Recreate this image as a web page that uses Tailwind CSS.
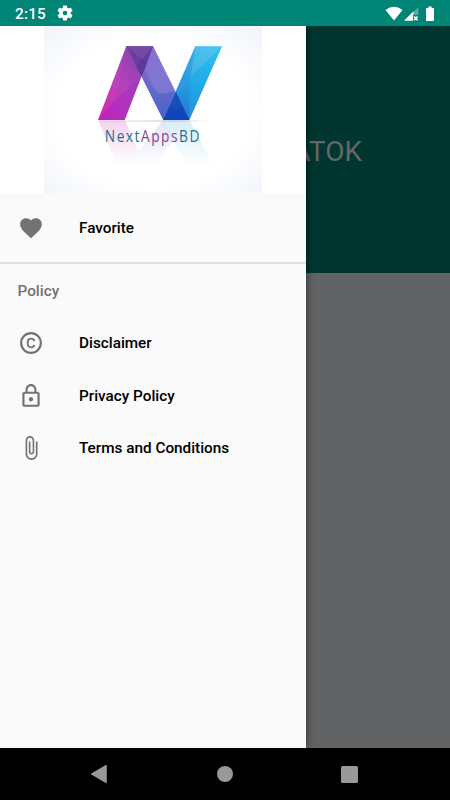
<!DOCTYPE html>
<html lang="en">
<head>
<meta charset="utf-8">
<title>NextAppsBD</title>
<script src="https://cdn.jsdelivr.net/npm/@tailwindcss/browser@4"></script>
</head>
<body class="bg-black">
<div class="w-[450px] h-[800px] overflow-hidden flex flex-col font-['Roboto',sans-serif]">
  <header class="h-[26px] shrink-0 bg-[#008577] flex items-center justify-between pl-[15px] pr-4 text-white">
    <div class="flex items-center gap-[11px]">
      <span class="text-[15.3px] leading-[26px] font-medium tracking-[0.2px] pt-[2px]">2:15</span>
      <svg class="w-4 h-4" viewBox="1.5 1.5 21 21" fill="#fff"><path d="M19.43 12.98c.04-.32.07-.64.07-.98s-.03-.66-.07-.98l2.11-1.65c.19-.15.24-.42.12-.64l-2-3.46c-.12-.22-.39-.3-.61-.22l-2.49 1c-.52-.4-1.08-.73-1.69-.98l-.38-2.65C14.46 2.18 14.25 2 14 2h-4c-.25 0-.46.18-.49.42l-.38 2.65c-.61.25-1.17.59-1.69.98l-2.49-1c-.23-.09-.49 0-.61.22l-2 3.46c-.13.22-.07.49.12.64l2.11 1.65c-.04.32-.07.65-.07.98s.03.66.07.98l-2.11 1.65c-.19.15-.24.42-.12.64l2 3.46c.12.22.39.3.61.22l2.49-1c.52.4 1.08.73 1.69.98l.38 2.65c.03.24.24.42.49.42h4c.25 0 .46-.18.49-.42l.38-2.65c.61-.25 1.17-.59 1.69-.98l2.49 1c.23.09.49 0 .61-.22l2-3.46c.12-.22.07-.49-.12-.64l-2.11-1.65zM12 15a3 3 0 1 1 0-6 3 3 0 0 1 0 6z"/></svg>
    </div>
    <div class="flex items-center pt-[1px]">
      <svg class="w-[18px] h-4" viewBox="0 0 18 16"><path d="M9 14.6 .5 4Q9-2.4 17.5 4Z" fill="#fff"/></svg>
      <svg class="w-4 h-4 ml-[1px]" viewBox="0 0 16 16"><path d="M14.3 1.2V9H9V6.5Z" fill="#fff" fill-opacity=".35"/><path d="M0 14.8 9.5 5.3V14.8Z" fill="#fff"/><path d="M9 8.8h6v6.4H9z" fill="#008577"/><path d="m10 10.5 3.6 3.8m0-3.8L10 14.3" stroke="#fff" stroke-width="1.5"/></svg>
      <svg class="w-2 h-4 ml-[6px]" viewBox="0 0 8 16" fill="#fff"><path d="M2.4.5h3.2V2H7.3q.7 0 .7.7v11.6q0 .7-.7.7H.7q-.7 0-.7-.7V2.7Q0 2 .7 2h1.7z"/></svg>
    </div>
  </header>

  <main class="relative h-[722px] shrink-0 bg-[#616264]">
    <div class="h-[247px] bg-[#003530] flex items-center justify-end pr-[88px] pt-[5px]">
      <span class="text-[28px] leading-[32px] text-[#666]">ATOK</span>
    </div>

    <aside class="absolute inset-y-0 left-0 w-[306px] bg-[#fafafa] shadow-[1px_0_7px_rgba(0,0,0,0.45)] [clip-path:inset(0_-20px_0_0)] flex flex-col">
      <div class="h-[167px] shrink-0 bg-white flex justify-center">
        <svg class="w-[218px] h-[167px]" viewBox="44 26 218 167">
          <defs>
            <radialGradient id="bg" cx=".5" cy=".52" r=".74"><stop offset=".6" stop-color="#fff"/><stop offset=".8" stop-color="#f7f9fd"/><stop offset="1" stop-color="#f0f2f9"/></radialGradient>
            <linearGradient id="left" x1="98" y1="112" x2="145" y2="60" gradientUnits="userSpaceOnUse"><stop stop-color="#d321b4"/><stop offset=".5" stop-color="#b640bc"/><stop offset="1" stop-color="#8c42b2"/></linearGradient>
            <linearGradient id="mid" x1="135" y1="46" x2="178" y2="120" gradientUnits="userSpaceOnUse"><stop stop-color="#8957bd"/><stop offset=".5" stop-color="#716bca"/><stop offset="1" stop-color="#3f60cb"/></linearGradient>
            <linearGradient id="right" x1="216" y1="46" x2="175" y2="120" gradientUnits="userSpaceOnUse"><stop stop-color="#40c2f0"/><stop offset=".5" stop-color="#289fe2"/><stop offset="1" stop-color="#2373d2"/></linearGradient>
            <linearGradient id="fade" x1="0" y1="120" x2="0" y2="166" gradientUnits="userSpaceOnUse"><stop stop-color="#fff" stop-opacity=".26"/><stop offset="1" stop-color="#fff" stop-opacity="0"/></linearGradient>
            <mask id="m" maskUnits="userSpaceOnUse" x="44" y="120" width="218" height="60"><path d="M44 120.5h218v60H44z" fill="url(#fade)"/></mask>
            <radialGradient id="sh"><stop stop-color="#9298a5" stop-opacity=".3"/><stop offset="1" stop-color="#9298a5" stop-opacity="0"/></radialGradient>
          </defs>
          <path d="M44 26h218v167H44z" fill="url(#bg)"/>
          <ellipse cx="143" cy="121" rx="58" ry="1.5" fill="url(#sh)"/>
          <ellipse cx="176" cy="121" rx="36" ry="1.5" fill="url(#sh)"/>
          <g mask="url(#m)">
            <path d="M98 120h27l19 45h-27z" fill="#d74dbe"/>
            <path d="M163.3 120h26l-35 45h-27z" fill="#8c8dde"/>
            <path d="M163.3 120h26l24 45h-27z" fill="#64bdea"/>
          </g>
          <path d="M126.3 46.3H153L124.7 120H98Z" fill="url(#left)"/>
          <path d="M98 120 115 100 141.5 76.5 124.7 120Z" fill="#9a2cc4" fill-opacity=".4"/>
          <path d="M126.3 46.3 115 100 98 120Z" fill="#e05abb" fill-opacity=".13"/>
          <path d="M126.3 46.3H153L189.3 120H163.3Z" fill="url(#mid)"/>
          <path d="M153 46.3 176 92 157 94 145 70Z" fill="#8d84dd" fill-opacity=".5"/>
          <path d="M141.5 76.5 176 109 189.3 120H163.3Z" fill="#4f66cd" fill-opacity=".35"/>
          <path d="M195.3 46.3H222L189.3 120H163.3Z" fill="url(#right)"/>
          <path d="M195.3 46.3H222L190.3 77.5Z" fill="#64cbf2" fill-opacity=".35"/>
          <path d="M222 46.3 189.3 120 190.3 77.5Z" fill="#12bdf0" fill-opacity=".35"/>
          <path d="M195.3 46.3 176 92 163.3 120 190.3 77.5Z" fill="#3798e2" fill-opacity=".45"/>
          <path d="M126.3 46.3H153L141.5 76.5Z" fill="#7349a5"/>
          <path d="M126.3 46.3 147 63 141.5 76.5Z" fill="#5d3398" fill-opacity=".5"/>
          <path d="M153 46.3 136 67 141.5 76.5Z" fill="#512f98" fill-opacity=".5"/>
          <path d="M176 92 189.3 120H163.3Z" fill="#174fb9"/>
          <path d="M163.3 120 182 105.5 189.3 120Z" fill="#0e3eba" fill-opacity=".5"/>
          <path d="M189.3 120 170 105.5 163.3 120Z" fill="#0e3eba" fill-opacity=".5"/>
          <text transform="translate(104.8 142) scale(.88 1)" font-family="'Open Sans','Noto Sans',sans-serif" font-size="15.6" textLength="107.5" lengthAdjust="spacing" fill="#167394">Next<tspan fill="#8c3e94">Apps</tspan>BD</text>
        </svg>
      </div>

      <nav class="flex flex-col text-[15.3px] font-medium text-black">
        <a class="h-[69px] flex items-center pl-[17.5px] border-b-2 border-[#e0e0e0] box-content">
          <svg class="w-[26px] h-[26px] mr-[35.5px]" viewBox="0 0 24 24" fill="#737373"><path d="m12 21.35-1.45-1.32C5.4 15.36 2 12.28 2 8.5 2 5.42 4.42 3 7.5 3c1.74 0 3.41.81 4.5 2.09C13.09 3.81 14.76 3 16.5 3 19.58 3 22 5.42 22 8.5c0 3.78-3.4 6.86-8.55 11.54L12 21.35z"/></svg>
          <span class="pt-[1px]">Favorite</span>
        </a>
        <h2 class="h-[53px] pl-[17.5px] pt-[2px] flex items-center text-[#737373]">Policy</h2>
        <a class="h-[52.5px] flex items-center pl-[17.5px]">
          <svg class="w-[26px] h-[26px] mr-[35.5px]" viewBox="0 0 24 24" fill="none" stroke="#737373" stroke-width="2"><circle cx="12" cy="12" r="9.1"/><path d="M15 10.2Q14.7 8 12.1 8 9 8 9 11.2v1.6Q9 16 12.1 16q2.6 0 2.9-2.2" stroke-width="1.7"/></svg>
          <span>Disclaimer</span>
        </a>
        <a class="h-[52.5px] flex items-center pl-[17.5px]">
          <svg class="w-[26px] h-[26px] mr-[35.5px]" viewBox="0 0 24 24" fill="#737373"><path d="M12 17c1.1 0 2-.9 2-2s-.9-2-2-2-2 .9-2 2 .9 2 2 2zm6-9h-1V6c0-2.76-2.24-5-5-5S7 3.24 7 6v2H6c-1.1 0-2 .9-2 2v10c0 1.1.9 2 2 2h12c1.1 0 2-.9 2-2V10c0-1.1-.9-2-2-2zM8.9 6c0-1.71 1.39-3.1 3.1-3.1s3.1 1.39 3.1 3.1v2H8.9V6zM18 20H6V10h12v10z"/></svg>
          <span class="pt-[2px]">Privacy Policy</span>
        </a>
        <a class="h-[52.5px] flex items-center pl-[17.5px]">
          <svg class="w-[26px] h-[26px] mr-[35.5px]" viewBox="0 0 24 24" fill="#737373"><path d="M16.5 6v11.5c0 2.21-1.79 4-4 4s-4-1.79-4-4V5c0-1.38 1.12-2.5 2.5-2.5s2.5 1.12 2.5 2.5v10.5c0 .55-.45 1-1 1s-1-.45-1-1V6H10v9.5c0 1.38 1.12 2.5 2.5 2.5s2.5-1.12 2.5-2.5V5c0-2.21-1.79-4-4-4S7 2.79 7 5v12.5c0 3.04 2.46 5.5 5.5 5.5s5.5-2.46 5.5-5.5V6h-1.5z"/></svg>
          <span class="pt-[1px]">Terms and Conditions</span>
        </a>
      </nav>
    </aside>
  </main>

  <footer class="h-[52px] shrink-0 bg-black flex items-center pl-[90px]">
    <svg class="w-[18px] h-5" viewBox="0 0 18 20" fill="#999"><path d="M1.3 9.4 15.8 1.1q1-.5 1 .6v16.6q0 1.1-1 .6L1.3 10.6q-1-.6 0-1.2z"/></svg>
    <span class="w-4 h-4 rounded-full bg-[#999] ml-[109px]"></span>
    <span class="w-[17px] h-[17px] rounded-[1.5px] bg-[#999] ml-[108px]"></span>
  </footer>
</div>
</body>
</html>
